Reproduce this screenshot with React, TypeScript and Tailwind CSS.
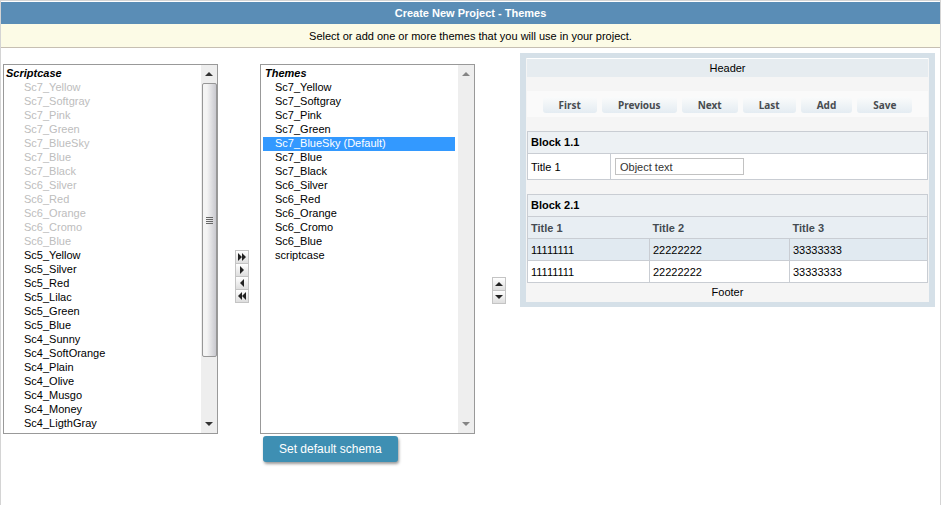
import type { ReactNode } from 'react';

type Item = { name: string; disabled?: boolean };

const off = (name: string): Item => ({ name, disabled: true });
const on = (name: string): Item => ({ name });

const available: Item[] = [
  ...['Sc7_Yellow', 'Sc7_Softgray', 'Sc7_Pink', 'Sc7_Green', 'Sc7_BlueSky', 'Sc7_Blue', 'Sc7_Black', 'Sc6_Silver', 'Sc6_Red', 'Sc6_Orange', 'Sc6_Cromo', 'Sc6_Blue'].map(off),
  ...['Sc5_Yellow', 'Sc5_Silver', 'Sc5_Red', 'Sc5_Lilac', 'Sc5_Green', 'Sc5_Blue', 'Sc4_Sunny', 'Sc4_SoftOrange', 'Sc4_Plain', 'Sc4_Olive', 'Sc4_Musgo', 'Sc4_Money', 'Sc4_LigthGray'].map(on),
];

const chosen: Item[] = ['Sc7_Yellow', 'Sc7_Softgray', 'Sc7_Pink', 'Sc7_Green', 'Sc7_BlueSky (Default)', 'Sc7_Blue', 'Sc7_Black', 'Sc6_Silver', 'Sc6_Red', 'Sc6_Orange', 'Sc6_Cromo', 'Sc6_Blue', 'scriptcase'].map(on);

function Arrow({ d, className = '' }: { d: string; className?: string }) {
  return (
    <svg viewBox="0 0 12 12" className={`block size-3 ${className}`} fill="currentColor" aria-hidden="true">
      <path d={d} />
    </svg>
  );
}

const UP = 'M6 4 L10 8 H2 Z';
const DOWN = 'M2 4 H10 L6 8 Z';

type ListBoxProps = { label: string; items: Item[]; selected?: string; thumb?: boolean };

function ListBox({ label, items, selected, thumb }: ListBoxProps) {
  const arrow = thumb ? 'text-[#333]' : 'text-[#858585]';
  const inset = thumb ? 'px-0' : 'pl-0.5 pr-[3px]';
  const indent = thumb ? 'pl-5' : 'pl-3';
  return (
    <div className="flex h-[370px] w-[215px] border border-[#999] bg-white">
      <select
        multiple
        aria-label={label}
        defaultValue={selected ? [selected] : []}
        className={`h-full min-w-0 flex-1 appearance-none overflow-hidden border-0 bg-white py-0.5 text-[11px] leading-[14px] text-black outline-none ${inset}`}
      >
        <optgroup label={label} className="p-0 font-bold italic text-black">
          {items.map((item) => (
            <option
              key={item.name}
              value={item.name}
              disabled={item.disabled}
              className={`h-3.5 min-h-0 p-0 font-normal not-italic leading-[14px] text-black checked:bg-linear-to-r checked:from-[#3399ff] checked:to-[#3399ff] checked:[-webkit-text-fill-color:#fff] disabled:[-webkit-text-fill-color:#bdbdbd] ${indent}`}
            >
              {item.name}
            </option>
          ))}
        </optgroup>
      </select>
      <div className="flex w-4 flex-col items-center bg-[#eeeeee]">
        <div className="flex h-[18px] items-center">
          <Arrow d={UP} className={arrow} />
        </div>
        {thumb && (
          <div className="flex h-[274px] w-[15px] flex-col items-center justify-center gap-px rounded-xs border border-[#979797] bg-linear-to-r from-[#f4f4f4] from-30% to-[#c9c9cf]">
            {[0, 1, 2, 3].map((n) => (
              <span key={n} className="h-px w-[7px] bg-[#666]" />
            ))}
          </div>
        )}
        <div className="mt-auto flex h-[18px] items-center">
          <Arrow d={DOWN} className={arrow} />
        </div>
      </div>
    </div>
  );
}

function MoveButton({ label, d }: { label: string; d: string }) {
  return (
    <button
      type="button"
      aria-label={label}
      className="-mb-px flex h-3.5 w-3.5 items-center justify-center border border-[#c4c4c4] bg-linear-to-b from-white to-[#dedede] text-[#222]"
    >
      <Arrow d={d} className="shrink-0" />
    </button>
  );
}

function BlockTitle({ children }: { children: ReactNode }) {
  return <h2 className="h-[22px] border border-b-0 border-[#c9cdd3] bg-[#edf1f4] pl-[3px] text-[11px] font-bold leading-[21px]">{children}</h2>;
}

function Preview() {
  const cell = 'border border-[#c9cdd3] p-0 pt-px pl-[3px] text-left';
  return (
    <section aria-label="Theme preview" className="mr-[5px] min-w-0 flex-1 border-x-[6px] border-y-[5px] border-[#d5e0e8] bg-[#f5f5f5] px-px">
      <div className="h-[19px] border-t border-white bg-[#e6ecf0] text-center leading-[19px]">Header</div>
      <div className="mt-3.5 flex h-[26px] items-center justify-center gap-[5px] bg-[#fafafa] pt-0.5">
        {['First', 'Previous', 'Next', 'Last', 'Add', 'Save'].map((name) => (
          <button
            key={name}
            type="button"
            className="h-4 rounded-[3px] bg-linear-to-b from-[#fafbfb] to-[#e4ecf2] px-4 font-['Noto_Sans',sans-serif] text-[10px] font-bold leading-4 text-[#484c50]"
          >
            {name}
          </button>
        ))}
      </div>
      <div className="mt-3.5">
        <BlockTitle>Block 1.1</BlockTitle>
        <div className="flex h-[27px] items-stretch border border-[#c9cdd3] bg-white">
          <label htmlFor="title-1" className="w-[83px] border-r border-[#c9cdd3] pl-[3px] leading-[26px]">
            Title 1
          </label>
          <input
            id="title-1"
            type="text"
            defaultValue="Object text"
            className="mt-1 ml-1 h-[17px] w-[129px] border border-[#c2c2c2] bg-white px-1 text-[11px] text-[#333] outline-none"
          />
        </div>
      </div>
      <div className="mt-3.5">
        <BlockTitle>Block 2.1</BlockTitle>
        <table className="w-full table-fixed border-collapse text-[11px] leading-[20px]">
          <colgroup>
            <col className="w-[122px]" />
            <col className="w-[140px]" />
            <col />
          </colgroup>
          <thead>
            <tr className="h-[22px] border border-[#c9cdd3] bg-[#e8eef3] text-[#444b52]">
              {['Title 1', 'Title 2', 'Title 3'].map((t) => (
                <th key={t} scope="col" className="p-0 pt-px pl-[3px] text-left font-bold">
                  {t}
                </th>
              ))}
            </tr>
          </thead>
          <tbody>
            {['bg-[#e1eaf1]', 'bg-white'].map((bg) => (
              <tr key={bg} className={`h-[22px] ${bg}`}>
                <td className={cell}>11111111</td>
                <td className={cell}>22222222</td>
                <td className={cell}>33333333</td>
              </tr>
            ))}
          </tbody>
        </table>
      </div>
      <div className="h-[19px] text-center leading-[19px]">Footer</div>
    </section>
  );
}

export default function App() {
  return (
    <main className="min-h-screen border-x border-t border-[#d4d4d4] bg-white font-['Liberation_Sans',Arial,sans-serif] text-[11px] text-black">
      <h1 className="mt-px h-[22px] bg-[#5a8db6] text-center text-[11px] font-bold leading-[22px] text-white">Create New Project - Themes</h1>
      <p className="h-6 border-b border-[#c6bfb2] bg-[#fcfbe6] text-center leading-[24px]">
        Select or add one or more themes that you will use in your project.
      </p>
      <div className="flex items-start pt-[5px] pl-0.5">
        <div className="mt-[11px] shrink-0">
          <ListBox label="Scriptcase" items={available} thumb />
        </div>
        <div className="mt-[197px] mr-[11px] ml-[17px] flex shrink-0 flex-col">
          <MoveButton label="Add all themes" d="M2 2 L6 6 V2 L10 6 L6 10 V6 L2 10 Z" />
          <MoveButton label="Add theme" d="M4 2 L8 6 L4 10 Z" />
          <MoveButton label="Remove theme" d="M8 2 L4 6 L8 10 Z" />
          <MoveButton label="Remove all themes" d="M10 2 L6 6 V2 L2 6 L6 10 V6 L10 10 Z" />
        </div>
        <div className="mt-[11px] shrink-0">
          <ListBox label="Themes" items={chosen} selected="Sc7_BlueSky (Default)" />
          <button
            type="button"
            className="mt-0.5 ml-[3px] h-[26px] rounded-[3px] bg-[#3e8fb3] px-4 text-xs leading-[27px] text-white shadow-[1px_2px_3px_#00000066]"
          >
            Set default schema
          </button>
        </div>
        <div className="mt-[224px] mr-3.5 ml-[17px] flex shrink-0 flex-col">
          <MoveButton label="Move up" d={UP} />
          <MoveButton label="Move down" d={DOWN} />
        </div>
        <Preview />
      </div>
    </main>
  );
}
